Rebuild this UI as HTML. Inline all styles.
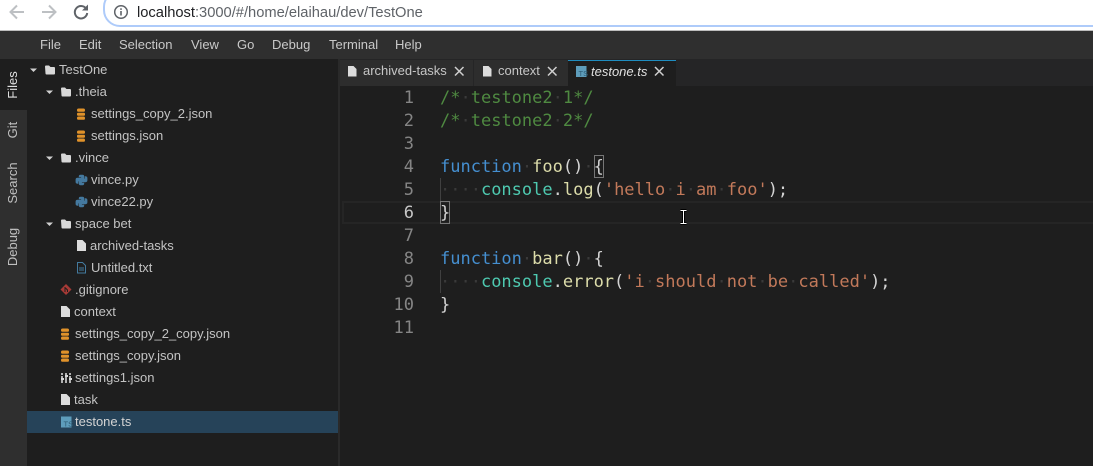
<!DOCTYPE html>
<html><head><meta charset="utf-8"><style>
html,body{margin:0;padding:0;background:#1e1e1e}
#r{position:relative;width:1093px;height:466px;overflow:hidden;background:#1e1e1e;font-family:"Liberation Sans",sans-serif}
#r div,#r span.a,#r svg{position:absolute}
.m{top:37px;font-size:13px;line-height:15px;color:#c9c9c9;white-space:pre}
.t{font-size:13px;line-height:22px;height:22px;color:#c3c3c3;white-space:pre}
.v{color:#d4d4d4;font-size:13px;white-space:pre;transform:rotate(-90deg);transform-origin:center;width:50px;text-align:center;height:14px;line-height:14px;left:-12px}
.c{left:440px;margin-top:1px;font-family:"DejaVu Sans Mono",monospace;font-size:17px;line-height:23px;height:23px;white-space:pre;color:#d4d4d4}
.n{left:350px;margin-top:1px;width:64px;text-align:right;font-family:"DejaVu Sans Mono",monospace;font-size:17px;line-height:23px;height:23px;color:#858585}
.cm{color:#4f8a41}.k{color:#458fd0}.f{color:#dcdcaa}.s{color:#c2795a}.o{color:#4ec9b0}.w{color:#3a3a3a}
.tab{top:60px;height:26px;background:#2d2d2d}
.tt{top:63px;font-size:13px;line-height:16px;color:#c6c6c6;white-space:pre}
</style></head><body><div id="r">
<!-- browser chrome -->
<div style="left:0;top:0;width:1093px;height:30px;background:#fff"></div>
<div style="left:0;top:30px;width:1093px;height:1px;background:#bdbdbd"></div>
<svg style="left:8px;top:3px" width="18" height="18" viewBox="0 0 18 18"><path d="M16 9H3M9 2.500L2.500 9L9 15.500" fill="none" stroke="#bdc0c3" stroke-width="2"/></svg>
<svg style="left:40px;top:3px" width="18" height="18" viewBox="0 0 18 18"><path d="M2 9H15M9 2.500L15.500 9L9 15.500" fill="none" stroke="#bdc0c3" stroke-width="2"/></svg>
<svg style="left:72px;top:3px" width="18" height="18" viewBox="0 0 18 18"><path d="M14 5.500A6.200 6.200 0 1 0 15.200 10" fill="none" stroke="#5f6368" stroke-width="2"/><path d="M16 1.500V7.500H10Z" fill="#5f6368"/></svg>
<div style="left:103px;top:-10px;width:1040px;height:33px;border:2px solid #aecbfa;border-radius:17px;background:#fff"></div>
<svg style="left:113px;top:4px" width="16" height="16" viewBox="0 0 16 16"><circle cx="8" cy="8" r="6.300" fill="none" stroke="#5f6368" stroke-width="1.500"/><rect x="7.200" y="7" width="1.600" height="4.500" fill="#5f6368"/><rect x="7.200" y="4.300" width="1.600" height="1.600" fill="#5f6368"/></svg>
<div style="left:137px;top:4px;font-size:14.700px;line-height:18px;color:#202124;white-space:pre">localhost<span style="color:#5f6368">:3000/#/home/elaihau/dev/TestOne</span></div>
<!-- menu -->
<div style="left:0;top:31px;width:1093px;height:28px;background:#2f2f2f"></div>
<div class="m" style="left:40px">File</div><div class="m" style="left:79px">Edit</div><div class="m" style="left:119px">Selection</div><div class="m" style="left:191px">View</div><div class="m" style="left:237px">Go</div><div class="m" style="left:272px">Debug</div><div class="m" style="left:329px">Terminal</div><div class="m" style="left:395px">Help</div>
<!-- side rail -->
<div style="left:0;top:59px;width:27px;height:407px;background:#2f2f2f"></div>
<div style="left:0;top:59px;width:27px;height:51px;background:#1e1e1e"></div>
<div class="v" style="top:78px;color:#e0e0e0">Files</div>
<div class="v" style="top:123px;color:#c0c0c0">Git</div>
<div class="v" style="top:176px;color:#c0c0c0">Search</div>
<div class="v" style="top:240px;color:#c0c0c0">Debug</div>
<!-- selection -->
<div style="left:27px;top:411px;width:311px;height:22px;background:#264359"></div>
<div style="left:338px;top:59px;width:2px;height:407px;background:#2a2a2a"></div>
<!-- tree -->
<svg style="left:0;top:0" width="340" height="466" viewBox="0 0 340 466">
<g fill="#d0d0d0">
<path d="M30 68.500h7l-3.500 3.500z"/><path d="M46 90.500h7l-3.500 3.500z"/><path d="M46 156.500h7l-3.500 3.500z"/><path d="M46 222.500h7l-3.500 3.500z"/>
<path d="M45 66.500a1 1 0 0 1 1-1h3l1.500 1.500h3.500a1 1 0 0 1 1 1v5.500a1 1 0 0 1-1 1h-7.500a1 1 0 0 1-1-1z" fill="#d8d8d8"/>
<path d="M61 88.500a1 1 0 0 1 1-1h3l1.500 1.500h3.500a1 1 0 0 1 1 1v5.500a1 1 0 0 1-1 1h-7.500a1 1 0 0 1-1-1z" fill="#d8d8d8"/>
<path d="M61 154.500a1 1 0 0 1 1-1h3l1.500 1.500h3.500a1 1 0 0 1 1 1v5.500a1 1 0 0 1-1 1h-7.500a1 1 0 0 1-1-1z" fill="#d8d8d8"/>
<path d="M61 220.500a1 1 0 0 1 1-1h3l1.500 1.500h3.500a1 1 0 0 1 1 1v5.500a1 1 0 0 1-1 1h-7.500a1 1 0 0 1-1-1z" fill="#d8d8d8"/>
<path d="M77 240h5.500l3.500 3.500v7.500h-9z" fill="#dcdcdc"/>
<path d="M61 306h5.500l3.500 3.500v7.500h-9z" fill="#dcdcdc"/>
<path d="M61 394h5.500l3.500 3.500v7.500h-9z" fill="#dcdcdc"/>
</g>
<!-- db icons -->
<g fill="#e0922a">
<rect x="77" y="108.500" width="8" height="3.300" rx="1.600"/><rect x="77" y="112.700" width="8" height="3" rx="1"/><rect x="77" y="116.500" width="8" height="3.300" rx="1.600"/>
<rect x="77" y="130.500" width="8" height="3.300" rx="1.600"/><rect x="77" y="134.700" width="8" height="3" rx="1"/><rect x="77" y="138.500" width="8" height="3.300" rx="1.600"/>
<rect x="61" y="328.500" width="8" height="3.300" rx="1.600"/><rect x="61" y="332.700" width="8" height="3" rx="1"/><rect x="61" y="336.500" width="8" height="3.300" rx="1.600"/>
<rect x="61" y="350.500" width="8" height="3.300" rx="1.600"/><rect x="61" y="354.700" width="8" height="3" rx="1"/><rect x="61" y="358.500" width="8" height="3.300" rx="1.600"/>
</g>
<!-- python -->
<g fill="#44799f">
<path d="M80.500 174.800h2a1.700 1.700 0 0 1 1.700 1.700v3a1.200 1.200 0 0 1-1.200 1.200h-3a1.700 1.700 0 0 0-1.700 1.700v1.300h-1a1.900 1.900 0 0 1-1.700-2v-2a1.900 1.900 0 0 1 1.900-1.900h3.600v-.6h-2.300v-.7a1.700 1.700 0 0 1 1.700-1.700z"/>
<path transform="rotate(180 81.500 180)" d="M80.500 174.800h2a1.700 1.700 0 0 1 1.700 1.700v3a1.200 1.200 0 0 1-1.200 1.200h-3a1.700 1.700 0 0 0-1.700 1.700v1.300h-1a1.900 1.900 0 0 1-1.700-2v-2a1.900 1.900 0 0 1 1.900-1.900h3.600v-.6h-2.300v-.7a1.700 1.700 0 0 1 1.700-1.700z"/>
<path transform="translate(0 22)" d="M80.500 174.800h2a1.700 1.700 0 0 1 1.700 1.700v3a1.200 1.200 0 0 1-1.200 1.200h-3a1.700 1.700 0 0 0-1.700 1.700v1.300h-1a1.900 1.900 0 0 1-1.700-2v-2a1.900 1.900 0 0 1 1.900-1.900h3.600v-.6h-2.300v-.7a1.700 1.700 0 0 1 1.700-1.700z"/>
<path transform="translate(0 22) rotate(180 81.500 180)" d="M80.500 174.800h2a1.700 1.700 0 0 1 1.700 1.700v3a1.200 1.200 0 0 1-1.200 1.200h-3a1.700 1.700 0 0 0-1.700 1.700v1.300h-1a1.900 1.900 0 0 1-1.700-2v-2a1.900 1.900 0 0 1 1.900-1.900h3.600v-.6h-2.300v-.7a1.700 1.700 0 0 1 1.700-1.700z"/>
</g>
<!-- txt -->
<path d="M77.500 262.500h5l3 3v7.500h-8zM79 268h5M79 270h5" fill="none" stroke="#437a9e" stroke-width="1"/>
<!-- git -->
<path d="M66 284l5.500 5.500-5.500 5.500-5.500-5.500z" fill="#a73a36"/><path d="M65 287v5M65.500 288l2 2v2" stroke="#1e1e1e" stroke-width="1" fill="none"/>
<!-- settings -->
<path d="M62 373v10M66 373v10M70 373v10" stroke="#d8d8d8" stroke-width="1.600" fill="none" stroke-dasharray="2 1 7"/>
<path d="M61 379h3M65 376h3M69 379h3" stroke="#d8d8d8" stroke-width="2"/>
<!-- ts -->
<rect x="61" y="416.500" width="10.500" height="11" fill="#5e9dbb"/>
<text x="63.500" y="426.500" font-family="Liberation Sans" font-size="7.500" fill="#2c5a72">TS</text>
</svg>
<div class="t" style="left:59px;top:59px">TestOne</div>
<div class="t" style="left:75px;top:81px">.theia</div>
<div class="t" style="left:91px;top:103px">settings_copy_2.json</div>
<div class="t" style="left:91px;top:125px">settings.json</div>
<div class="t" style="left:75px;top:147px">.vince</div>
<div class="t" style="left:91px;top:169px">vince.py</div>
<div class="t" style="left:91px;top:191px">vince22.py</div>
<div class="t" style="left:75px;top:213px">space bet</div>
<div class="t" style="left:90px;top:235px">archived-tasks</div>
<div class="t" style="left:91px;top:257px">Untitled.txt</div>
<div class="t" style="left:75px;top:279px">.gitignore</div>
<div class="t" style="left:74px;top:301px">context</div>
<div class="t" style="left:75px;top:323px">settings_copy_2_copy.json</div>
<div class="t" style="left:75px;top:345px">settings_copy.json</div>
<div class="t" style="left:75px;top:367px">settings1.json</div>
<div class="t" style="left:74px;top:389px">task</div>
<div class="t" style="left:75px;top:411px;color:#d4d4d4">testone.ts</div>
<!-- tabs -->
<div style="left:340px;top:59px;width:753px;height:27px;background:#252526"></div>
<div class="tab" style="left:340px;width:133px"></div>
<div class="tab" style="left:474px;width:94px"></div>
<div class="tab" style="left:568px;width:108px;background:#1e1e1e;border-top:1px solid #1f8dc0;height:25px"></div>
<svg style="left:340px;top:59px" width="340" height="27" viewBox="0 0 340 27">
<g fill="#dcdcdc"><path d="M8 7h5.500l3 3v7.500h-8.500z"/><path d="M143 7h5.500l3 3v7.500h-8.500z"/></g>
<g stroke="#d0d0d0" stroke-width="1.500" fill="none"><path d="M115 8l8.500 8.500M123.500 8l-8.500 8.500"/><path d="M208 8l8.500 8.500M216.500 8l-8.500 8.500"/><path d="M315 8l8.500 8.500M323.500 8l-8.500 8.500"/></g>
<rect x="236" y="7" width="10.500" height="11" fill="#5e9dbb"/>
<text x="238.500" y="17" font-family="Liberation Sans" font-size="7.500" fill="#2c5a72">TS</text>
</svg>
<div class="tt" style="left:363px">archived-tasks</div>
<div class="tt" style="left:498px">context</div>
<div class="tt" style="left:591px;font-style:italic;color:#e0e0e0;top:64px">testone.ts</div>
<!-- editor -->
<div style="left:342px;top:201px;width:751px;height:2px;background:#252525"></div>
<div style="left:342px;top:222px;width:751px;height:2px;background:#252525"></div>
<div style="left:342px;top:201px;width:2px;height:23px;background:#252525"></div>
<div style="left:440px;top:178px;width:1px;height:23px;background:#404040"></div>
<div style="left:440px;top:270px;width:1px;height:23px;background:#404040"></div>
<div style="left:594px;top:155px;width:8px;height:21px;border:1px solid #777"></div>
<div style="left:440px;top:201px;width:8px;height:21px;border:1px solid #777"></div>
<div class="n" style="top:86px">1</div><div class="n" style="top:109px">2</div><div class="n" style="top:132px">3</div><div class="n" style="top:155px">4</div><div class="n" style="top:178px">5</div><div class="n" style="top:201px;color:#c6c6c6">6</div><div class="n" style="top:224px">7</div><div class="n" style="top:247px">8</div><div class="n" style="top:270px">9</div><div class="n" style="top:293px">10</div><div class="n" style="top:316px">11</div>
<div class="c cm" style="top:86px">/*<span class="w">·</span>testone2<span class="w">·</span>1*/</div>
<div class="c cm" style="top:109px">/*<span class="w">·</span>testone2<span class="w">·</span>2*/</div>
<div class="c" style="top:155px"><span class="k">function</span><span class="w">·</span><span class="f">foo</span>()<span class="w">·</span>{</div>
<div class="c" style="top:178px"><span class="w">····</span><span class="o">console</span>.<span class="f">log</span>(<span class="s">'hello<span class="w">·</span>i<span class="w">·</span>am<span class="w">·</span>foo'</span>);</div>
<div class="c" style="top:201px">}</div>
<div class="c" style="top:247px"><span class="k">function</span><span class="w">·</span><span class="f">bar</span>()<span class="w">·</span>{</div>
<div class="c" style="top:270px"><span class="w">····</span><span class="o">console</span>.<span class="f">error</span>(<span class="s">'i<span class="w">·</span>should<span class="w">·</span>not<span class="w">·</span>be<span class="w">·</span>called'</span>);</div>
<div class="c" style="top:293px">}</div>
<!-- mouse I-beam -->
<svg style="left:679px;top:209px" width="9" height="17" viewBox="0 0 9 17"><path d="M1.500 1.500h6M4.500 1.500v13M1.500 14.500h6" stroke="#000" stroke-width="3" fill="none"/><path d="M1.500 1.500h6M4.500 1.500v13M1.500 14.500h6" stroke="#fff" stroke-width="1" fill="none"/></svg>
</div></body></html>
